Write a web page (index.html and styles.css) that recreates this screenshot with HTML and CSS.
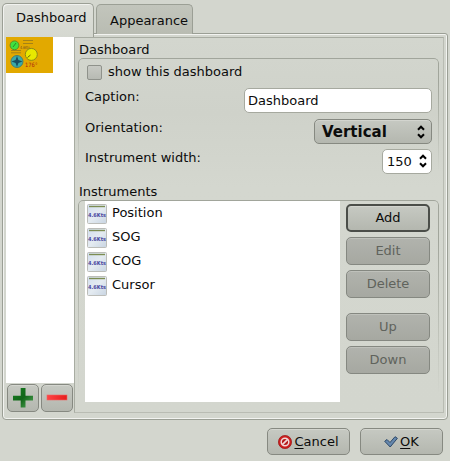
FILE: index.html
```
<!DOCTYPE html>
<html lang="en">
<head>
<meta charset="utf-8">
<title>Dashboard preferences</title>
<link rel="stylesheet" href="styles.css">
</head>
<body>
<svg class="defs" width="0" height="0" aria-hidden="true">
  <defs>
    <linearGradient id="tile" x1="0" y1="0" x2="1" y2="1"><stop offset="0" stop-color="#d3dff0"/><stop offset=".5" stop-color="#e4ebf1"/><stop offset="1" stop-color="#c8d4e2"/></linearGradient>
    <linearGradient id="green" x1="0" y1="0" x2="1" y2="1"><stop offset="0" stop-color="#168020"/><stop offset=".5" stop-color="#126519"/><stop offset="1" stop-color="#55aa5a"/></linearGradient>
    <linearGradient id="red" x1="0" y1="0" x2="1" y2="0"><stop offset="0" stop-color="#ff4545"/><stop offset="1" stop-color="#e61d1d"/></linearGradient>
    <symbol id="instrument" viewBox="0 0 20 20">
      <rect x=".5" y=".5" width="19" height="19" rx="1" fill="url(#tile)" stroke="#bcbdb9"/>
      <path d="M2 2.5h16" stroke="#7d8d52" stroke-width="1.4"/>
      <text x="10" y="13" text-anchor="middle" textLength="18" lengthAdjust="spacingAndGlyphs" class="reading">4.6Kts</text>
    </symbol>
    <symbol id="arrows" viewBox="0 0 8 14">
      <path d="M1 4.8 4 1.7l3 3.1M1 9.2l3 3.1 3-3.1" fill="none" stroke="#000" stroke-width="2"/>
    </symbol>
  </defs>
</svg>
<div class="tabs">
  <div class="tab active">Dashboard</div>
  <div class="tab">Appearance</div>
</div>
<main class="notebook">
  <aside class="sidebar">
    <div class="boards">
      <svg class="board" width="47" height="36" viewBox="0 0 47 36">
        <rect width="47" height="36" fill="#e2a900"/>
        <path d="M17 3.5h10M17 6.5h10M5 13.5h10M5 15.8h10" stroke="#a58217" stroke-width="1"/>
        <circle cx="8.5" cy="8.3" r="4.4" fill="#40e040" stroke="#628b20"/>
        <path d="M7 10l3-4" stroke="#268d28"/>
        <text x="14" y="11.8" textLength="10" lengthAdjust="spacingAndGlyphs" class="tiny">4.6Kts</text>
        <circle cx="25.3" cy="17.4" r="6" fill="#e8e800" stroke="#8c8817"/>
        <path d="M21.5 20.5l3-2.5" stroke="#69620a"/>
        <circle cx="11" cy="24.5" r="6" fill="#39aaa9" stroke="#467f70"/>
        <path d="M11 19l1.4 4.1 4.1 1.4-4.1 1.4L11 30l-1.4-4.1-4.1-1.4 4.1-1.4z" fill="#174f65"/>
        <text x="19" y="29.5" textLength="12.5" lengthAdjust="spacingAndGlyphs" class="heading">176°</text>
      </svg>
    </div>
    <div class="tools">
      <div class="button tool"><svg width="22" height="22" viewBox="0 0 22 22"><path d="M8.7 1h4.8v7.8H21v4.6h-7.5v7.2H8.7v-7.2H1V8.8h7.7z" fill="url(#green)"/></svg></div>
      <div class="button tool"><svg width="22" height="22" viewBox="0 0 22 22"><rect x="1" y="8" width="20" height="5" fill="url(#red)" stroke="#e66" stroke-width=".6"/></svg></div>
    </div>
  </aside>
  <section class="panel">
    <h2>Dashboard</h2>
    <div class="group settings">
      <label class="check"><span class="box"></span>show this dashboard</label>
      <div class="row caption"><span>Caption:</span><div class="field">Dashboard</div></div>
      <div class="row orientation"><span>Orientation:</span><div class="button select">Vertical<svg width="8" height="14"><use href="#arrows"/></svg></div></div>
      <div class="row width"><span>Instrument width:</span><div class="field spin">150<svg width="8" height="14"><use href="#arrows"/></svg></div></div>
    </div>
    <h2 class="second">Instruments</h2>
    <div class="group instruments">
      <ul>
        <li><svg width="20" height="20"><use href="#instrument"/></svg>Position</li>
        <li><svg width="20" height="20"><use href="#instrument"/></svg>SOG</li>
        <li><svg width="20" height="20"><use href="#instrument"/></svg>COG</li>
        <li><svg width="20" height="20"><use href="#instrument"/></svg>Cursor</li>
      </ul>
      <div class="actions">
        <div class="button default">Add</div>
        <div class="button disabled">Edit</div>
        <div class="button disabled">Delete</div>
        <div class="button disabled apart">Up</div>
        <div class="button disabled">Down</div>
      </div>
    </div>
  </section>
</main>
<footer>
  <div class="button"><svg width="14" height="14" viewBox="0 0 14 14"><circle cx="7" cy="7" r="6.6" fill="#cc1f1f" stroke="#991414" stroke-width=".7"/><circle cx="7" cy="7" r="3.8" fill="#b51a1a" stroke="#f1dada" stroke-width="1.5"/><path d="M4.3 9.7l5.4-5.4" stroke="#f1dada" stroke-width="1.7"/></svg><span><u>C</u>ancel</span></div>
  <div class="button"><svg width="14" height="14" viewBox="0 0 14 14"><path d="M.7 6.3 3 4.5l3 3 5-5.8 2.4 1.6L6.2 12z" fill="#6587ad" stroke="#2c4869"/></svg><span><u>O</u>K</span></div>
</footer>
</body>
</html>
```
FILE: styles.css
```
* { box-sizing: border-box; }
body {
  margin: 0;
  width: 450px;
  height: 461px;
  overflow: hidden;
  background: #d3d6ce;
  color: #0c0c0c;
  font: 13px/16px "DejaVu Sans", sans-serif;
}
svg { display: block; flex: none; }
.defs { position: absolute; }
.reading { font-size: 5.5px; font-weight: bold; fill: #4848a0; }
.tiny { font-size: 4px; fill: #705020; }
.heading { font-size: 6px; fill: #b02810; }

.tabs { display: flex; height: 33px; padding: 3px 0 0 2px; gap: 2px; }
.tab {
  width: 97px;
  height: 30px;
  margin-top: 1px;
  padding: 8px 0 0 13px;
  border: 1px solid #9b9f95;
  border-bottom: 0;
  border-radius: 5px 5px 0 0;
  background: linear-gradient(#c2c5bc, #b9bcb2);
}
.tab.active {
  position: relative;
  z-index: 1;
  width: 92px;
  height: 34px;
  margin-top: 0;
  padding: 6px 0 0 13px;
  background: linear-gradient(#dddfd9, #d5d8d0);
  box-shadow: inset 1px 1px #f1f2ef;
}

.notebook {
  display: flex;
  width: 446px;
  height: 387px;
  margin-left: 2px;
  padding: 2px 2px 5px 2px;
  border: 1px solid #9b9f95;
  border-radius: 0 3px 4px 4px;
  box-shadow: inset 0 0 0 1px #f2f3f0;
}
.sidebar { width: 68px; margin: 1px 0 0 1px; }
.boards { height: 346px; background: #fff; }
.tools { display: flex; gap: 2px; padding: 1px 0 0 1px; }

.panel {
  width: 370px;
  height: 376px;
  margin-top: 1px;
  padding: 4px 4px 0 3px;
  border: 1px solid #a8aca2;
  border-right-color: #b9bcb3;
  border-bottom-color: #b9bcb3;
  background: linear-gradient(#d3d6ce, #cfd2ca 20%, #d4d7cf 40%, #d3d6ce);
}
h2 { margin: 0 0 0 1px; font: inherit; }
h2.second { margin-top: 4px; }
.group {
  position: relative;
  border-radius: 5px;
  border: 1px solid transparent;
}
.group::before {
  content: "";
  position: absolute;
  inset: -1px;
  border: 1px solid #a1a59b;
  border-bottom: 0;
  border-radius: 5px;
  mask-image: linear-gradient(#000, #000 20%, transparent 92%);
  pointer-events: none;
}
.settings { height: 122px; padding: 5px 6px 0 6px; }
.check { display: flex; align-items: center; height: 16px; gap: 6px; padding-left: 2px; }
.box {
  width: 15px;
  height: 15px;
  border: 1px solid #8f928b;
  border-radius: 2px;
  background: linear-gradient(#c8cac4, #b7bab3);
}
.row { display: flex; justify-content: space-between; }
.caption { margin-top: 8px; }
.orientation { margin-top: 6px; }
.width { margin-top: 5px; }
.field {
  width: 188px;
  height: 25px;
  padding: 4px 3px;
  border: 1px solid #a6a99f;
  border-radius: 5px;
  background: #fff;
}
.spin { display: flex; justify-content: space-between; width: 50px; padding: 4px; }
.button {
  display: flex;
  align-items: center;
  justify-content: center;
  width: 84px;
  height: 28px;
  gap: 2px;
  border: 1px solid #868981;
  border-radius: 5px;
  background: linear-gradient(#c6c9c2, #b4b7af);
  box-shadow: inset 0 1px #d3d5cf;
}
.select {
  justify-content: space-between;
  width: 118px;
  height: 25px;
  padding: 0 6px 0 7px;
  font-size: 15px;
  font-weight: bold;
}
.row span { margin-top: 1px; }
.instruments { display: flex; height: 210px; padding-left: 6px; }
ul { width: 255px; height: 201px; margin: 0; padding: 1px 2px; background: #fff; list-style: none; }
li { display: flex; align-items: flex-start; height: 24px; gap: 5px; line-height: 21px; }
li svg { margin-top: 2px; }
.actions { display: flex; flex-direction: column; gap: 5px; padding: 3px 0 0 6px; }
.default { border: 2px solid #4b4e49; }
.disabled { border-color: #858881; background: linear-gradient(#b1b3ad, #a6a8a1); color: #60635c; box-shadow: inset 0 1px #bfc1bb; }
.apart { margin-top: 10px; }
.tool { width: 32px; }
footer { display: flex; gap: 10px; padding: 8px 0 0 267px; }
footer .button { width: 83px; height: 27px; }
u { text-underline-offset: 2px; }
```
